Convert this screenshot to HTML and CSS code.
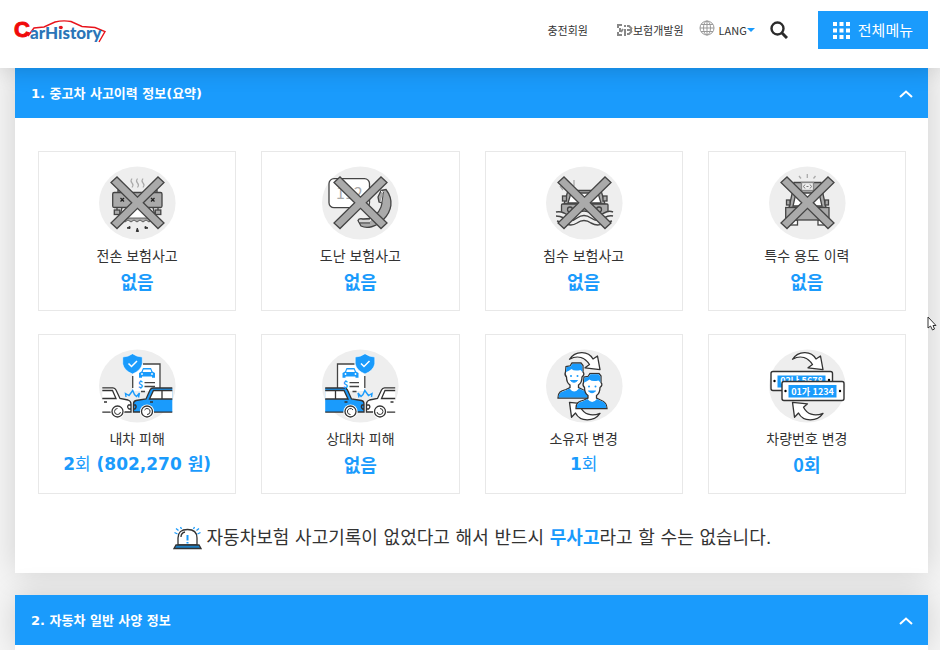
FILE: index.html
```html
<!DOCTYPE html>
<html lang="ko">
<head>
    <meta charset="UTF-8">
    <meta name="viewport" content="width=device-width, initial-scale=1.0">
    <title>CarHistory</title>
    <link rel="stylesheet" href="styles.css">
</head>
<body>
    <svg class="defs" aria-hidden="true">
        <symbol id="cross" viewBox="0 0 84 74">
            <path d="M16 16.5 22 11 42.5 31.2 63 11 69 16.5 48.3 36.7 69 57 63 62.5 42.5 42.3 22 62.5 16 57 36.7 36.7Z" fill="#aaa" stroke="#444" stroke-width="1.3"/>
        </symbol>
        <symbol id="arrows" viewBox="0 0 84 74">
            <g fill="#fff" stroke="#333" stroke-width="1.3" stroke-linejoin="round">
                <path d="M27.5 10.3C33 2 46 1 51 10L55.5 7 58 20.7 43 18.8 47.5 15.5C43 9 36 5.5 27.5 10.3Z"/>
                <path d="M58 64.3C52 73 38 73 33.5 64L29.5 68.2 27.5 53.3 42.5 54.8 38.5 58.2C42 65 49 68 58 64.3Z"/>
            </g>
        </symbol>
        <symbol id="crash" viewBox="0 0 84 74">
            <path d="M38 15H65V42H38Z" fill="#fff"/>
            <path d="M48 15H65V42M37.7 27V39M46 42.5H50" fill="none" stroke="#444" stroke-width="1.3"/>
            <path d="M37.5 4.7Q42 8 47.3 8V15Q46 21.5 37.5 25 29 21.5 27.7 15V8Q33 8 37.5 4.7Z" fill="#1a9bfc" stroke="#fff" stroke-width=".6"/>
            <path d="M44 28.7V24L46.5 22.5 48 19H56L57.5 22.5 60 24V28.7H57V27.5H47V28.7Z" fill="#1a9bfc"/>
            <path d="M48.5 20.5H55.5L56.3 23H47.7Z" fill="#fff"/>
            <circle cx="47" cy="25" r=".9" fill="#fff"/><circle cx="57" cy="25" r=".9" fill="#fff"/>
            <path d="M31 48 30.5 44.5 34 46.5 35.5 44.5 37.7 41.5 39.5 45.5 41.5 47.5 44.5 44 43.5 48.5" fill="none" stroke="#1a9bfc" stroke-width="1.4"/>
            <path d="M7.3 38.8H18Q20 38.8 21 41L25 49.5 33 51Q36 52 36 55V63H7.3Z" fill="#fff"/>
            <path d="M7.3 38.8H18Q20 38.8 21 41L25 49.5 33 51Q36 52 36 55V63H29M7.3 41.5H17.5L21 49.5H7.3M9 53H12M7.3 63.2H16M36 56H33.5Q31.5 58 34 60H36" fill="none" stroke="#333" stroke-width="1.3"/>
            <path d="M77.3 39H58Q56 39 55 41L51 50 41 51.5Q38.5 52 38.5 55V63H77.3Z" fill="#1a9bfc"/>
            <path d="M77.3 41.5H58.5L54.5 50H77.3Z" fill="#fff"/>
            <path d="M77.3 39H58Q56 39 55 41L51 50 41 51.5Q38.5 52 38.5 55V63H45M77.3 41.5H58.5L54.5 50H77.3M67 41.5V50M55 53H58M59 63.2H77.3M38.5 56H40.5Q42 58 40 60H38.5" fill="none" stroke="#333" stroke-width="1.3"/>
            <g fill="#fff">
                <circle cx="22.5" cy="62.5" r="7"/><circle cx="52" cy="62.5" r="7"/>
                <circle cx="22.5" cy="62.5" r="5.5" stroke="#333" stroke-width="1.3"/>
                <circle cx="52" cy="62.5" r="5.5" stroke="#333" stroke-width="1.3"/>
            </g>
            <path d="M22.5 59.5A3 3 0 1 0 25.5 63M49.5 61A3 3 0 1 1 52 65.5" fill="none" stroke="#333"/>
        </symbol>
        <symbol id="person" viewBox="0 0 34 38">
            <path d="M1 36C1 30 4 29 9 27.5L13 25.5V23C10 21 9.5 18 9.5 15 7.5 13 8 11 8.5 10L9 4.5 13 4 15 1H24L26 3.5V10C27.5 11.5 27 13.5 25 15 25 18 24.5 21 21.5 23V25.5L25.5 27.5C30 29 32 31 32 36Z" fill="#fff" stroke="#333" stroke-width="1.3"/>
            <path d="M9 10 9.5 5 13.5 4.5 15.5 1.7H23.5L25.3 4V10L23.5 8Q17 9.5 14.5 7 12 9 9 10Z" fill="#1a9bfc"/>
            <path d="M1.7 35.5C2 30.5 4 30 9 28.2L12.5 26.5Q17 32.5 22 26.5L25.5 28.2C29.5 29.5 31.2 31 31.3 35.5Z" fill="#1a9bfc"/>
            <circle cx="14" cy="14" r="1" fill="#1a9bfc"/><circle cx="20.5" cy="14" r="1" fill="#1a9bfc"/>
            <path d="M13.5 18.5Q17 22 20.5 18.5Z" fill="#1a9bfc" stroke="#1a9bfc"/>
        </symbol>
    </svg>

    <header class="header">
        <a class="logo" href="#" aria-label="CarHistory">
            <svg width="94" height="34" viewBox="0 0 94 34">
                <path d="M13 23 19 15 29 14 40 9Q48 7 56 8.5L67 13.5 80 14.5 90 18.5 84 29" fill="none" stroke="#e8141c" stroke-width="1.4"/>
                <text class="logo-c" x="-1" y="24">C</text>
                <text class="logo-text" x="15" y="26">arHistory</text>
                <circle cx="46" cy="14.5" r="1.8" fill="#e8141c"/>
            </svg>
        </a>
        <nav class="nav">
            <a class="nav-link" href="#">충전회원</a>
            <a class="nav-link" href="#">
                <svg width="16" height="12" viewBox="0 0 16 12" fill="none" stroke="#888" stroke-width="2">
                    <path d="M5 1H1V4M1 8V11H5M3 4V8M6 5 4 8M8 1V3M8 5V12M10 2H12L15 5M10 6H15M15 7 12 10H10"/>
                </svg>보험개발원
            </a>
            <button class="lang" type="button">
                <svg width="16" height="16" viewBox="0 0 16 16" fill="none" stroke="#999">
                    <circle cx="8" cy="8" r="7"/>
                    <ellipse cx="8" cy="8" rx="3.5" ry="7"/>
                    <path d="M8 1V15M1 8H15M2 4.5H14M2 11.5H14"/>
                </svg>
                <span class="lang-name">LANG</span>
            </button>
            <button class="search" type="button" aria-label="검색">
                <svg width="18" height="18" viewBox="0 0 18 18" fill="none" stroke="#2b2b2b">
                    <circle cx="7.5" cy="7.5" r="6" stroke-width="2.4"/>
                    <path d="M12 12 17 17" stroke-width="3"/>
                </svg>
            </button>
            <button class="all-menu" type="button">
                <svg width="17" height="17" viewBox="0 0 17 17" fill="#fff">
                    <path d="M0 0h4v4H0zM6.5 0h4v4h-4zM13 0h4v4h-4zM0 6.5h4v4H0zM6.5 6.5h4v4h-4zM13 6.5h4v4h-4zM0 13h4v4H0zM6.5 13h4v4h-4zM13 13h4v4h-4z"/>
                </svg>
                <span>전체메뉴</span>
            </button>
        </nav>
    </header>

    <main class="content">
        <section class="panel">
            <h2 class="panel-title">
                <button class="panel-toggle" type="button">
                    1. 중고차 사고이력 정보(요약)
                    <svg width="14" height="8" viewBox="0 0 14 8" fill="none" stroke="#fff" stroke-width="2"><path d="M1 7 7 1.5 13 7"/></svg>
                </button>
            </h2>
            <div class="panel-body">
                <ul class="cards">
                    <li class="card">
                        <svg class="card-icon" viewBox="0 0 84 74">
                            <ellipse class="disc" cx="42.3" cy="37" rx="38.3" ry="36.5"/>
                            <path d="M37 12.5q-2 2.5 0 4.5t0 4.5M42.5 12.5q-2 2.5 0 4.5t0 4.5M48 12.5q-2 2.5 0 4.5t0 4.5" fill="none" stroke="#aaa" stroke-width="1.2"/>
                            <path d="M27 41H58L54 53H30Z" fill="#fff"/>
                            <g fill="#aaa" stroke="#444" stroke-width="1.3">
                                <rect x="23" y="24" width="4" height="3"/><rect x="58" y="24" width="4" height="3"/>
                                <rect x="17.7" y="26.5" width="49.3" height="15" rx="1.5"/>
                                <rect x="19.3" y="44" width="5.5" height="4.5"/><rect x="60.3" y="44" width="5.5" height="4.5"/>
                                <path d="M22 41.5V44M63 41.5V44M27 41.5 24 54M58 41.5 61 54" fill="none"/>
                                <path d="M25 52H60V55L57 54 54 56 51 54 48 56 45 54 42 56 39 54 36 56 33 54 30 56 27 54Z" stroke-width=".8"/>
                                <path d="M25.5 32 29 35.5M29 32 25.5 35.5M56 32 59.5 35.5M59.5 32 56 35.5" stroke="#222"/>
                            </g>
                            <path d="M32 62 35 60.5V62.5ZM41.3 65.5 42.3 62 43.5 65.5ZM53 62 50 60.5V62.5Z" fill="#333" stroke="#333"/>
                            <use href="#cross"/>
                        </svg>
                        <h3 class="card-label">전손 보험사고</h3>
                        <p class="card-value">없음</p>
                    </li>
                    <li class="card">
                        <svg class="card-icon" viewBox="0 0 84 74">
                            <ellipse class="disc" cx="42.3" cy="37" rx="38.3" ry="36.5"/>
                            <rect x="11" y="12.7" width="40.5" height="29" rx="5" fill="#fff" stroke="#444" stroke-width="1.3"/>
                            <text class="dial-text" x="18" y="33">112</text>
                            <path d="M63 24.5 68 23.5C76 34 74 45 65 54 58 61 49 63 43 60L40 54.5Q41 52 45 53L53 52.5Q63 46 64 37L61 36 60 31Z" fill="#aaa" stroke="#444" stroke-width="1.3"/>
                            <path d="M63 25 65.5 27 63 36M41 55H52L53 52.5" fill="none" stroke="#fff"/>
                            <path d="M65.5 26 64 36M42 57H52" fill="none" stroke="#444"/>
                            <use href="#cross"/>
                        </svg>
                        <h3 class="card-label">도난 보험사고</h3>
                        <p class="card-value">없음</p>
                    </li>
                    <li class="card">
                        <svg class="card-icon" viewBox="0 0 84 74">
                            <ellipse class="disc" cx="42.3" cy="37" rx="38.3" ry="36.5"/>
                            <path d="M32 14V20M18 20l3 4" stroke="#aaa" stroke-width="1.3"/>
                            <g stroke="#444" stroke-width="1.3" fill="#aaa">
                                <path d="M26 24.5H59L63 38H22Z"/>
                                <path d="M29 27H56L59 37H26Z" fill="#fff"/>
                                <rect x="20.5" y="30" width="4" height="5"/><rect x="61" y="30" width="4" height="5"/>
                                <rect x="19.5" y="38" width="46.5" height="15" rx="1"/>
                                <circle cx="28" cy="43.5" r="2.5"/><circle cx="57" cy="43.5" r="2.5"/>
                            </g>
                            <path d="M14 48Q18 44 22 47 29 53 35 47 42 42 49 47 56 53 62 47 67 44 71 48V60H14Z" fill="#eee"/>
                            <g fill="none" stroke="#444" stroke-width="1.5">
                                <path d="M14 46Q18 45 22 47 29 52 35 47 42 43 49 47 56 52 62 47 67 44 71 46"/>
                                <path d="M14 50Q18 50 22 52 29 57 35 52 42 47 49 52 56 57 62 52 67 49 71 50"/>
                                <path d="M15 55 22 57Q29 61 35 57 42 52 49 57 56 61 62 57L70 55"/>
                            </g>
                            <use href="#cross"/>
                        </svg>
                        <h3 class="card-label">침수 보험사고</h3>
                        <p class="card-value">없음</p>
                    </li>
                    <li class="card">
                        <svg class="card-icon" viewBox="0 0 84 74">
                            <ellipse class="disc" cx="42.3" cy="37" rx="38.3" ry="36.5"/>
                            <path d="M42.3 8V12M34 10 36 12.5M50.5 10 48.5 12.5" stroke="#aaa" stroke-width="1.3"/>
                            <g stroke="#444" stroke-width="1.3" fill="#aaa">
                                <path d="M29 16.5H56L58 28 61 41.5H24L27 28Z"/>
                                <path d="M31 27H54L57 40H28Z" fill="#fff"/>
                                <rect x="36.5" y="16.5" width="12" height="8" fill="#eee" stroke="#888"/>
                                <path d="M40 18.5l-1.5 2 1.5 2M45 18.5l1.5 2-1.5 2M41.5 20.5h2" fill="none" stroke="#777" stroke-width="1"/>
                                <rect x="21.5" y="34" width="3.5" height="5"/><rect x="60" y="34" width="3.5" height="5"/>
                                <rect x="25" y="54" width="7.5" height="5" fill="#fff"/><rect x="53" y="54" width="7.5" height="5" fill="#fff"/>
                                <rect x="20.7" y="41.5" width="43.3" height="12.5"/>
                            </g>
                            <use href="#cross"/>
                        </svg>
                        <h3 class="card-label">특수 용도 이력</h3>
                        <p class="card-value">없음</p>
                    </li>
                    <li class="card">
                        <svg class="card-icon" viewBox="0 0 84 74">
                            <ellipse class="disc" cx="42.3" cy="37" rx="38.3" ry="36.5"/>
                            <use href="#crash"/>
                            <path d="M33.5 14.5 36.5 17.5 42 12" fill="none" stroke="#fff" stroke-width="1.5"/>
                            <text class="dollar" x="43" y="38.5">$</text>
                            <path d="M49.5 33.7H60M49.5 37.5H60" stroke="#444" stroke-width="1.3"/>
                        </svg>
                        <h3 class="card-label">내차 피해</h3>
                        <p class="card-value amount">2<span class="unit">회</span> (802,270 원)</p>
                    </li>
                    <li class="card">
                        <svg class="card-icon" viewBox="0 0 84 74">
                            <ellipse class="disc" cx="42.3" cy="37" rx="38.3" ry="36.5"/>
                            <use href="#crash" transform="translate(84.5) scale(-1 1)"/>
                            <path d="M43 14.5 46 17.5 51.5 12" fill="none" stroke="#fff" stroke-width="1.5"/>
                            <text class="dollar" x="25" y="38.5">$</text>
                            <path d="M31.5 33.7H41M31.5 37.5H41" stroke="#444" stroke-width="1.3"/>
                        </svg>
                        <h3 class="card-label">상대차 피해</h3>
                        <p class="card-value">없음</p>
                    </li>
                    <li class="card">
                        <svg class="card-icon" viewBox="0 0 84 74">
                            <ellipse class="disc" cx="42.3" cy="37" rx="38.3" ry="36.5"/>
                            <use href="#arrows"/>
                            <use href="#person" x="15" y="13" width="34" height="38"/>
                            <use href="#person" x="33" y="23.5" width="34" height="38"/>
                        </svg>
                        <h3 class="card-label">소유자 변경</h3>
                        <p class="card-value amount">1<span class="unit">회</span></p>
                    </li>
                    <li class="card">
                        <svg class="card-icon" viewBox="0 0 84 74">
                            <ellipse class="disc" cx="42.3" cy="37" rx="38.3" ry="36.5"/>
                            <use href="#arrows"/>
                            <rect x="6" y="22.5" width="61.5" height="19" rx="2" fill="#fff" stroke="#333" stroke-width="1.4"/>
                            <rect x="12.5" y="26.5" width="48" height="12" fill="#1a9bfc"/>
                            <text class="plate-text" x="36.5" y="35">02나 5678</text>
                            <circle cx="9.5" cy="32" r="1.2"/><circle cx="64" cy="31" r="1.2"/>
                            <rect x="17" y="32.5" width="62" height="19" rx="2" fill="#fff" stroke="#333" stroke-width="1.4"/>
                            <rect x="23.5" y="36" width="48" height="12.5" fill="#1a9bfc"/>
                            <text class="plate-text" x="47.5" y="46">01가 1234</text>
                            <circle cx="20.5" cy="42" r="1.2"/><circle cx="75" cy="42" r="1.2"/>
                        </svg>
                        <h3 class="card-label">차량번호 변경</h3>
                        <p class="card-value">0회</p>
                    </li>
                </ul>
                <p class="notice">
                    <svg width="29" height="24" viewBox="0 0 29 24" fill="none" stroke="#333" stroke-width="1.3">
                        <path d="M5 19V12Q5 3.5 14.5 3.5T24 12V19Z" fill="#fff"/>
                        <path d="M8 11Q8 7 12 6"/>
                        <path d="M3 19H26L28 22.5H1Z" fill="#1c7fc4"/>
                        <path d="M14.5 9V14.5M14.5 16V17.5" stroke="#1a9bfc" stroke-width="2"/>
                        <path d="M1.5 6.5 4.5 8M3 2.5 5.5 4.5M7.5 1 8.5 3M27.5 6.5 24.5 8M26 2.5 23.5 4.5M21.5 1 20.5 3" stroke="#1a9bfc"/>
                    </svg>
                    <span>자동차보험 사고기록이 없었다고 해서 반드시 <strong>무사고</strong>라고 할 수는 없습니다.</span>
                </p>
            </div>
        </section>

        <section class="panel panel-last">
            <h2 class="panel-title">
                <button class="panel-toggle" type="button">
                    2. 자동차 일반 사양 정보
                    <svg width="14" height="8" viewBox="0 0 14 8" fill="none" stroke="#fff" stroke-width="2"><path d="M1 7 7 1.5 13 7"/></svg>
                </button>
            </h2>
        </section>
    </main>

    <svg class="pointer" width="10" height="15" viewBox="0 0 10 15" fill="#fff" stroke="#333">
        <path d="M1 1V12L3.5 10 5.5 14 7.5 13 6 9.5H9Z"/>
    </svg>
</body>
</html>
```
FILE: styles.css
```css
* {
    margin: 0;
    padding: 0;
    box-sizing: border-box;
}

body {
    font-family: "Noto Sans CJK KR", sans-serif;
    color: #333;
    background: #f5f5f5;
    min-height: 100vh;
    display: flex;
    flex-direction: column;
    position: relative;
}

button {
    font-family: inherit;
    border: none;
    background: none;
    cursor: pointer;
}

a {
    color: inherit;
    text-decoration: none;
}

.defs {
    position: absolute;
    width: 0;
    height: 0;
}

/* header */
.header {
    position: sticky;
    top: 0;
    z-index: 10;
    display: flex;
    justify-content: space-between;
    align-items: center;
    padding: 11px 12px 19px 15px;
    background: #fff;
    box-shadow: 0 0 24px rgba(0, 0, 0, 0.2);
}

.logo svg {
    display: block;
    overflow: visible;
}

.logo-c {
    font: bold 22px "Liberation Sans", sans-serif;
    fill: #f00a0a;
    stroke: #f00a0a;
}

.logo-text {
    font: 900 17px Lato, sans-serif;
    fill: #2a75b8;
}

.nav {
    display: flex;
    align-items: center;
}

.nav-link {
    display: flex;
    align-items: center;
    margin-right: 29px;
    font-size: 11px;
}

.nav-link:nth-child(2) {
    margin-right: 15px;
}

.lang {
    display: flex;
    gap: 4px;
    margin-right: 15px;
    color: #333;
}

.lang-name {
    display: flex;
    align-items: center;
    font-size: 11px;
    line-height: 20px;
}

.lang-name::after {
    content: "";
    border: 4px solid transparent;
    border-top: 4px solid #1a9bfc;
    border-bottom: none;
}

.search {
    height: 18px;
    margin-right: 30px;
}

.all-menu {
    display: flex;
    align-items: center;
    gap: 8px;
    height: 38px;
    padding: 0 15px;
    background: #1a9bfc;
    color: #fff;
    font-size: 15px;
}

.all-menu span {
    padding-bottom: 2px;
}

/* panels */
.content {
    flex: 1;
    display: flex;
    flex-direction: column;
    gap: 22px;
    padding: 0 12px 0 15px;
}

.panel {
    background: #fff;
    box-shadow: 0 0 30px rgba(0, 0, 0, 0.15);
}

.panel-last {
    flex: 1;
    min-height: 55px;
}

.panel-toggle {
    display: flex;
    justify-content: space-between;
    align-items: center;
    width: 100%;
    height: 50px;
    padding: 0 15px 2px 16px;
    background: #1a9bfc;
    color: #fff;
    font: bold 13px "DejaVu Sans", "Noto Sans CJK KR", sans-serif;
}

.panel-toggle svg {
    margin-top: 4px;
}

.panel-body {
    padding: 33px 22px 20px 23px;
}

/* summary cards */
.cards {
    display: grid;
    grid-template-columns: repeat(4, 1fr);
    gap: 23px 25px;
    list-style: none;
}

.card {
    height: 160px;
    padding-top: 14px;
    border: 1px solid #e8e8e8;
    text-align: center;
}

.card-icon {
    display: block;
    width: 84px;
    height: 74px;
    margin: 0 auto;
}

.disc {
    fill: #eee;
}

.card-label {
    margin-top: 4px;
    font-size: 14px;
    font-weight: normal;
    line-height: 22px;
}

.card-value {
    font-size: 18px;
    font-weight: bold;
    line-height: 30px;
    color: #1a9bfc;
}

.amount {
    font-family: "DejaVu Sans", "Noto Sans CJK KR", sans-serif;
    font-size: 17px;
}

.unit {
    font-weight: normal;
}

.dial-text {
    font-size: 16px;
    fill: #aaa;
}

.dollar {
    font-size: 9px;
    font-weight: bold;
    fill: #1a9bfc;
}

.plate-text {
    font-size: 9px;
    font-weight: bold;
    text-anchor: middle;
    fill: #fff;
}

.notice {
    display: flex;
    justify-content: center;
    align-items: center;
    gap: 5px;
    margin-top: 29px;
    font: 18px "DejaVu Sans", "Noto Sans CJK KR", sans-serif;
    line-height: 30px;
}

.notice strong {
    color: #1a9bfc;
}

.pointer {
    position: absolute;
    top: 316px;
    right: 3px;
}
```
